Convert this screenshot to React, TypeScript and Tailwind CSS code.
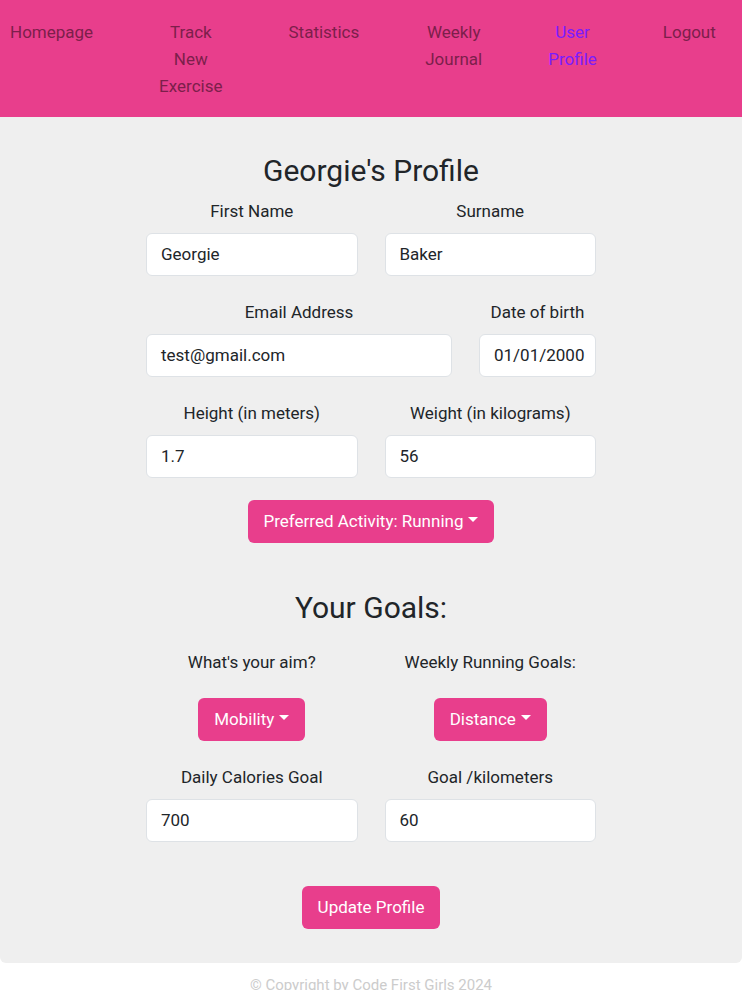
const navItems = [
  { label: 'Homepage' },
  { label: 'Track New Exercise' },
  { label: 'Statistics' },
  { label: 'Weekly Journal' },
  { label: 'User Profile', active: true },
  { label: 'Logout' },
];

function Caret() {
  // bootstrap-style dropdown triangle
  return (
    <span className="ml-[5px] inline-block h-0 w-0 translate-y-[-2px] border-x-[5px] border-t-[5px] border-x-transparent border-t-white align-middle" />
  );
}

function Field({ label, value }: { label: string; value: string }) {
  return (
    <div className="flex flex-col">
      <label className="mb-2 text-center leading-[27px]">{label}</label>
      <div className="flex h-[43px] items-center rounded-[6px] border border-[#dee2e6] bg-white px-[14px] leading-[27px]">
        {value}
      </div>
    </div>
  );
}

function PinkButton({ children }: { children: React.ReactNode }) {
  return (
    <button
      type="button"
      className="flex h-[43px] items-center rounded-[6px] bg-[#e83e8c] px-[16px] leading-[27px] text-white"
    >
      {children}
    </button>
  );
}

export default function App() {
  return (
    <div
      className="min-h-screen bg-white text-[17px] text-[#212529]"
      style={{ fontFamily: 'Roboto, "Liberation Sans", sans-serif' }}
    >
      {/* Navbar */}
      <nav className="flex h-[117px] items-start gap-[66px] bg-[#e83e8c] pl-[10px] pt-[19px]">
        {navItems.map((item) => (
          <a
            key={item.label}
            className={
              'w-min text-center leading-[27px] ' +
              (item.active ? 'text-[#7a1cff]' : 'text-[#7c1f4b]')
            }
          >
            {item.label}
          </a>
        ))}
      </nav>

      {/* Profile panel */}
      <main className="rounded-b-[6px] bg-[#efefef] pb-[34px] pt-[36px]">
        <div className="mx-auto flex w-[450px] flex-col">
          <h2 className="text-center text-[30px] leading-[36px]">Georgie's Profile</h2>

          <div className="mt-[9px] grid grid-cols-2 gap-x-[27px]">
            <Field label="First Name" value="Georgie" />
            <Field label="Surname" value="Baker" />
          </div>

          <div className="mt-[23px] grid grid-cols-[306px_117px] gap-x-[27px]">
            <Field label="Email Address" value="test@gmail.com" />
            <Field label="Date of birth" value="01/01/2000" />
          </div>

          <div className="mt-[23px] grid grid-cols-2 gap-x-[27px]">
            <Field label="Height (in meters)" value="1.7" />
            <Field label="Weight (in kilograms)" value="56" />
          </div>

          <div className="mt-[22px] flex justify-center">
            <PinkButton>
              Preferred Activity: Running
              <Caret />
            </PinkButton>
          </div>

          <h2 className="mt-[47px] text-center text-[30px] leading-[36px]">Your Goals:</h2>

          <div className="mt-[23px] grid grid-cols-2 gap-x-[27px]">
            <div className="flex flex-col items-center">
              <span className="leading-[27px]">What's your aim?</span>
              <div className="mt-[22px]">
                <PinkButton>
                  Mobility
                  <Caret />
                </PinkButton>
              </div>
            </div>
            <div className="flex flex-col items-center">
              <span className="leading-[27px]">Weekly Running Goals:</span>
              <div className="mt-[22px]">
                <PinkButton>
                  Distance
                  <Caret />
                </PinkButton>
              </div>
            </div>
          </div>

          <div className="mt-[23px] grid grid-cols-2 gap-x-[27px]">
            <Field label="Daily Calories Goal" value="700" />
            <Field label="Goal /kilometers" value="60" />
          </div>

          <div className="mt-[44px] flex justify-center">
            <PinkButton>Update Profile</PinkButton>
          </div>
        </div>
      </main>

      {/* Footer */}
      <footer className="py-[10px] text-center text-[15px] leading-[24px] text-[#cccccc]">
        © Copyright by Code First Girls 2024
      </footer>
    </div>
  );
}
